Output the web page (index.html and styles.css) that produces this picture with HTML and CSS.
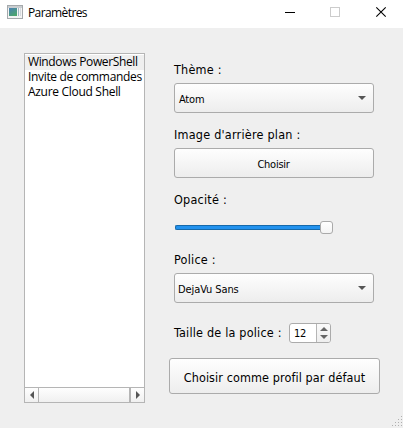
FILE: index.html
```html
<!DOCTYPE html>
<html lang="fr">
<head>
<meta charset="utf-8">
<title>Paramètres</title>
<link rel="stylesheet" href="styles.css">
</head>
<body>
<header class="titlebar">
  <svg class="app-icon" width="16" height="14" viewBox="0 0 16 14"><defs><linearGradient id="pane" x1="0" y1="0" x2="0.6" y2="1"><stop offset="0" stop-color="#4b7fb5"/><stop offset="1" stop-color="#4ba56f"/></linearGradient></defs><rect x=".5" y=".5" width="15" height="13" fill="#f4f4f4" stroke="#a5a9ac"/><rect x="1" y="1" width="14" height="2" fill="#c9cdd0"/><rect x="2" y="3" width="8" height="8" fill="url(#pane)"/><rect x="11" y="3" width="1" height="8" fill="#9fb8c4"/><rect x="13" y="3" width="1" height="8" fill="#d5dade"/></svg>
  <span class="title">Paramètres</span>
  <svg class="controls" width="103" height="12" viewBox="0 0 103 12"><path d="M0 6.5H10" stroke="#000"/><rect x="45.5" y="1.5" width="9" height="9" fill="none" stroke="#ccc"/><path d="M91.3 1.3L100.7 10.7M100.7 1.3L91.3 10.7" stroke="#000" stroke-width="1.1"/></svg>
</header>
<main class="content">
  <section class="list">
    <ul class="items">
      <li class="item current"><span class="t-win">Windows PowerShell</span></li>
      <li class="item"><span class="t-cmd">Invite de commandes</span></li>
      <li class="item"><span class="t-az">Azure Cloud Shell</span></li>
    </ul>
    <div class="scrollbar">
      <div class="arrow"><svg width="4" height="8" viewBox="0 0 4 8"><path d="M4 0V8L0 4Z" fill="#555"/></svg></div>
      <div class="thumb"></div>
      <div class="arrow last"><svg width="4" height="8" viewBox="0 0 4 8"><path d="M0 0V8L4 4Z" fill="#555"/></svg></div>
    </div>
  </section>
  <form class="form">
    <div class="label">Thème :</div>
    <div class="box combo"><span>Atom</span><svg width="8" height="4" viewBox="0 0 8 4"><path d="M0 0H8L4 4Z" fill="#555"/></svg></div>
    <div class="label">Image d'arrière plan :</div>
    <div class="box button"><span>Choisir</span></div>
    <div class="label">Opacité :</div>
    <div class="slider"><div class="track"></div><div class="handle"></div></div>
    <div class="label">Police :</div>
    <div class="box combo"><span class="font-name">DejaVu Sans</span><svg width="8" height="4" viewBox="0 0 8 4"><path d="M0 0H8L4 4Z" fill="#555"/></svg></div>
    <div class="size-row">
      <span class="size-label">Taille de la police :</span>
      <div class="spin"><span class="value">12</span><div class="steps"><svg width="8" height="12" viewBox="0 0 8 12"><path d="M0 4H8L4 0ZM0 8H8L4 12Z" fill="#666"/></svg></div></div>
    </div>
    <div class="box default"><span>Choisir comme profil par défaut</span></div>
  </form>
</main>
<svg class="grip" width="10" height="11" viewBox="0 0 10 11"><path d="M9 0h1v1h-1zM6 3h1v1h-1zM9 3h1v1h-1zM3 6h1v1h-1zM6 6h1v1h-1zM9 6h1v1h-1zM0 9h1v1h-1zM3 9h1v1h-1zM6 9h1v1h-1zM9 9h1v1h-1z" fill="#b0b0b0"/></svg>
</body>
</html>
```
FILE: styles.css
```css
* { box-sizing: border-box; }
body { margin: 0; width: 403px; height: 428px; overflow: hidden; background: #efefef; color: #000; font-family: "DejaVu Sans Condensed", "DejaVu Sans", sans-serif; font-stretch: condensed; font-size: 12.5px; position: relative; }
.titlebar { height: 28px; background: #fff; display: flex; align-items: center; padding: 0 0 4px 7px; }
.app-icon { flex: none; }
.title { font: 12px/16px "Open Sans", "Noto Sans", sans-serif; letter-spacing: -0.6px; margin: 2px 0 0 5px; flex: 1; }
.controls { flex: none; margin-right: 15px; }
.content { display: flex; padding: 25px 0 0 24px; }
.list { width: 121px; height: 350px; border: 1px solid #b5b5b5; background: #fff; display: flex; flex-direction: column; flex: none; }
.items { list-style: none; margin: 0; padding: 1px 0 0; flex: 1; }
.item { height: 15px; padding-left: 3px; font: 12px/14px "Open Sans", "Noto Sans", sans-serif; white-space: nowrap; }
.current { background: #efefef; }
.t-win { letter-spacing: -0.37px; }
.t-cmd { letter-spacing: -0.33px; }
.t-az { letter-spacing: -0.3px; }
.scrollbar { height: 15px; border-top: 1px solid #b5b5b5; display: flex; background: linear-gradient(#fefefe, #f0f0f0); }
.arrow { width: 14px; border-right: 1px solid #b5b5b5; display: flex; align-items: center; justify-content: center; }
.arrow.last { border-right: 0; border-left: 1px solid #b5b5b5; }
.thumb { flex: 1; border-right: 1px solid #b5b5b5; }
.form { width: 206px; margin-left: 29px; }
.label { height: 16px; line-height: 16px; margin: 14px 0 5px; letter-spacing: 0.23px; }
.label:first-child { margin-top: 9px; }
.box { width: 200px; height: 30px; border: 1px solid #ababab; border-radius: 3px; background: linear-gradient(#fefefe, #ededed); display: flex; align-items: center; font-size: 11px; letter-spacing: -0.2px; padding-top: 2px; }
.combo { justify-content: space-between; padding-left: 4px; padding-right: 7px; }
.combo svg { margin-top: -2px; }
.font-name { margin-left: -1px; letter-spacing: -0.1px; }
.button { justify-content: center; letter-spacing: -0.25px; padding-right: 1px; }
.slider { height: 14px; display: flex; align-items: center; width: 160px; padding-left: 1px; }
.label + .slider { margin-top: 12px; }
.slider + .label { margin-top: 18px; }
.track { width: 145px; height: 5px; border: 1px solid #1669aa; border-right: 0; border-radius: 2px 0 0 2px; background: #2292ee; }
.handle { width: 13px; height: 13px; border: 1px solid #aaa; border-radius: 3px; background: linear-gradient(#fff, #f4f4f4); }
.size-row { display: flex; align-items: center; height: 20px; margin-top: 20px; }
.size-label { width: 115px; white-space: nowrap; letter-spacing: 0.2px; margin-top: -1px; }
.spin { width: 42px; height: 20px; border: 1px solid #ababab; border-radius: 3px; background: #fff; display: flex; overflow: hidden; }
.value { flex: 1; padding-left: 4px; font-size: 11px; line-height: 20px; letter-spacing: -0.2px; }
.steps { width: 14px; border-left: 1px solid #b5b5b5; background: linear-gradient(#fafafa, #eee); display: flex; align-items: center; justify-content: center; }
.default { width: 211px; height: 36px; margin: 15px 0 0 -5px; justify-content: center; font-size: 12.5px; letter-spacing: 0.1px; white-space: nowrap; }
.grip { position: absolute; right: 1px; bottom: 1px; }
```
